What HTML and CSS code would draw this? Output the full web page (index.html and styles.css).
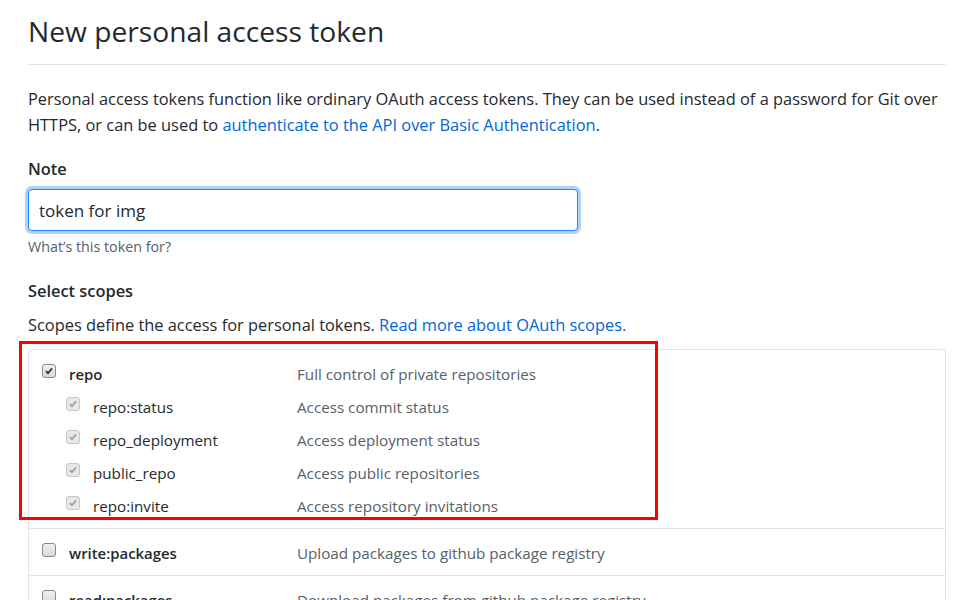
FILE: index.html
```html
<!DOCTYPE html>
<html lang="en">
<head>
<meta charset="utf-8">
<title>New personal access token</title>
<link rel="stylesheet" href="styles.css">
</head>
<body>
<div class="page">
  <div class="subhead">
    <h1 class="subhead-heading">New personal access token</h1>
  </div>
  <p class="intro">Personal access tokens function like ordinary OAuth access tokens. They can be used instead of a password for Git over HTTPS, or can be used to <a href="#">authenticate to the API over Basic Authentication</a>.</p>

  <div class="form-group">
    <label class="form-label" for="note">Note</label>
    <div class="input-wrap"><input id="note" class="form-input" type="text" value="token for img"></div>
    <p class="note">What’s this token for?</p>
  </div>

  <h2 class="form-label scopes-title">Select scopes</h2>
  <p class="scopes-desc">Scopes define the access for personal tokens. <a href="#">Read more about OAuth scopes.</a></p>

  <div class="scopes">
    <div class="annotation"></div>
    <div class="scope-group">
      <div class="scope-row top">
        <span class="cb checked"><svg viewBox="0 0 13 13"><path d="M3.2 6.6 L5.4 8.9 L9.8 3.6"/></svg></span>
        <span class="scope-name bold">repo</span>
        <span class="scope-desc">Full control of private repositories</span>
      </div>
      <div class="scope-row sub">
        <span class="cb checked disabled"><svg viewBox="0 0 13 13"><path d="M3.2 6.6 L5.4 8.9 L9.8 3.6"/></svg></span>
        <span class="scope-name">repo:status</span>
        <span class="scope-desc">Access commit status</span>
      </div>
      <div class="scope-row sub">
        <span class="cb checked disabled"><svg viewBox="0 0 13 13"><path d="M3.2 6.6 L5.4 8.9 L9.8 3.6"/></svg></span>
        <span class="scope-name">repo_deployment</span>
        <span class="scope-desc">Access deployment status</span>
      </div>
      <div class="scope-row sub">
        <span class="cb checked disabled"><svg viewBox="0 0 13 13"><path d="M3.2 6.6 L5.4 8.9 L9.8 3.6"/></svg></span>
        <span class="scope-name">public_repo</span>
        <span class="scope-desc">Access public repositories</span>
      </div>
      <div class="scope-row sub">
        <span class="cb checked disabled"><svg viewBox="0 0 13 13"><path d="M3.2 6.6 L5.4 8.9 L9.8 3.6"/></svg></span>
        <span class="scope-name">repo:invite</span>
        <span class="scope-desc">Access repository invitations</span>
      </div>
    </div>
    <div class="scope-group">
      <div class="scope-row top">
        <span class="cb"></span>
        <span class="scope-name bold">write:packages</span>
        <span class="scope-desc">Upload packages to github package registry</span>
      </div>
    </div>
    <div class="scope-group">
      <div class="scope-row top">
        <span class="cb"></span>
        <span class="scope-name bold">read:packages</span>
        <span class="scope-desc">Download packages from github package registry</span>
      </div>
    </div>
  </div>
</div>
</body>
</html>
```

FILE: styles.css
```css
html, body {
  margin: 0;
  padding: 0;
  background: #fff;
}
body {
  font-family: "Open Sans", "Noto Sans", "Liberation Sans", sans-serif;
  font-size: 16.4px;
  line-height: 26px;
  color: #24292e;
}
a {
  color: #0366d6;
  text-decoration: none;
}
.page {
  width: 918px;
  padding: 12px 0 0 28px;
}
.subhead {
  padding-bottom: 14px;
  border-bottom: 1px solid #e1e4e8;
}
.subhead-heading {
  margin: 0;
  font-size: 28.2px;
  font-weight: 400;
  line-height: 38px;
}
.intro {
  margin: 21px 0 18px;
}
.form-label {
  display: block;
  margin: 0;
  font-size: 16.4px;
  font-weight: 600;
  line-height: 26px;
}
.input-wrap {
  margin-top: 7px;
}
.form-input {
  box-sizing: border-box;
  width: 550px;
  height: 42px;
  margin: 0;
  padding: 0 10px;
  font-family: inherit;
  font-size: 17px;
  color: #24292e;
  border: 1px solid #2188ff;
  border-radius: 4px;
  outline: none;
  box-shadow: 0 0 0 3px rgba(3, 102, 214, 0.3);
}
.note {
  margin: 6px 0 0;
  font-size: 14.3px;
  line-height: 20px;
  color: #586069;
}
.scopes-title {
  margin-top: 21px;
}
.scopes-desc {
  margin: 8px 0 11px;
}
.scopes {
  position: relative;
  border: 1px solid #e1e4e8;
  border-radius: 4px;
  height: 260px;
  font-size: 15.2px;
}
.annotation {
  position: absolute;
  left: -10px;
  top: -9px;
  width: 633px;
  height: 173px;
  border: 3px solid #ff0000;
  pointer-events: none;
}
.scope-group {
  padding: 7px 0 6px 13px;
  border-bottom: 1px solid #e1e4e8;
}
.scope-group:last-child {
  border-bottom: none;
}
.scope-row {
  display: flex;
  align-items: center;
  height: 33px;
}
.scope-row.sub {
  padding-left: 24px;
}
.cb {
  box-sizing: border-box;
  flex: none;
  width: 14px;
  height: 14px;
  margin-top: -6px;
  border: 1px solid #8a8a8a;
  border-radius: 3px;
  background: linear-gradient(#f0f0f0, #dadada);
}
.cb svg {
  display: block;
  width: 12px;
  height: 12px;
}
.cb svg path {
  fill: none;
  stroke: #333;
  stroke-width: 2;
}
.cb.disabled {
  border-color: #c6c6c6;
  background: #e8e8e8;
}
.cb.disabled svg path {
  stroke: #a0a0a0;
}
.scope-name {
  width: 228px;
  margin-left: 13px;
}
.scope-row.sub .scope-name {
  width: 204px;
}
.scope-name.bold {
  font-weight: 600;
  font-size: 14.9px;
}
.scope-desc {
  color: #586069;
}
```
